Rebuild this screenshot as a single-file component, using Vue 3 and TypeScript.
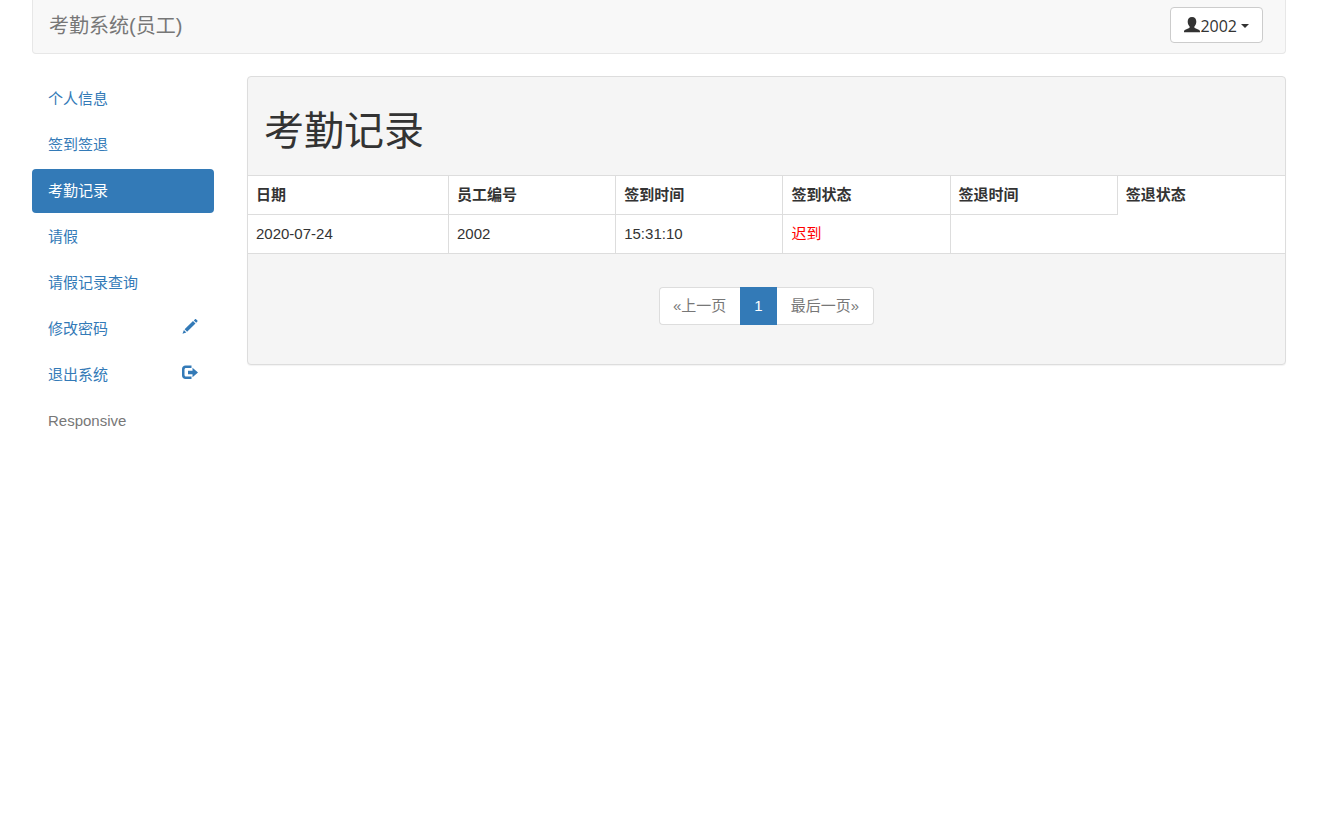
<script setup lang="ts">
interface NavItem {
  label: string
  icon?: 'pencil' | 'logout'
  active?: boolean
  muted?: boolean
}

interface AttendanceRecord {
  date: string
  employeeId: string
  signInTime: string
  signInStatus: string
}

const employeeId = '2002'

const navItems: NavItem[] = [
  { label: '个人信息' },
  { label: '签到签退' },
  { label: '考勤记录', active: true },
  { label: '请假' },
  { label: '请假记录查询' },
  { label: '修改密码', icon: 'pencil' },
  { label: '退出系统', icon: 'logout' },
  { label: 'Responsive', muted: true },
]

const columns: string[] = ['日期', '员工编号', '签到时间', '签到状态', '签退时间', '签退状态']

const records: AttendanceRecord[] = [
  { date: '2020-07-24', employeeId: '2002', signInTime: '15:31:10', signInStatus: '迟到' },
]
</script>

<template>
  <div class="page">
    <header class="navbar">
      <a class="brand" href="#">考勤系统(员工)</a>
      <button class="user-button" type="button" aria-haspopup="true">
        <svg class="icon" viewBox="0 0 16 16" aria-hidden="true">
          <path d="M8 0C5.200 0 3.700 1.800 3.700 4.500c0 2 .7 3.700 1.700 4.800.5.6.4 1.300-.2 1.600L1.300 12.700C.5 13.100 0 13.700 0 14.500V15.200h16v-.7c0-.8-.5-1.400-1.300-1.800l-3.900-1.800c-.6-.3-.7-1-.2-1.600 1-1.100 1.700-2.800 1.700-4.800C12.300 1.800 10.800 0 8 0z" />
        </svg>
        <span>{{ employeeId }}</span>
        <span class="caret"></span>
      </button>
    </header>

    <div class="columns">
      <nav class="sidebar">
        <ul class="nav-list">
          <li v-for="item in navItems" :key="item.label">
            <a class="nav-link" :class="{ active: item.active, muted: item.muted }" href="#">
              <span>{{ item.label }}</span>
              <svg v-if="item.icon === 'pencil'" class="icon" viewBox="0 0 16 16" aria-hidden="true">
                <path d="M13 1.200c.3-.3.700-.3 1 0l1.400 1.400c.3.3.3.7 0 1l-1.200 1.200-2.400-2.400zM11 3.100l2.500 2.500-8.400 8.200-2.500-2.500zM1.900 12l2.400 2.400L.5 15.800z" />
              </svg>
              <svg v-if="item.icon === 'logout'" class="icon" viewBox="0 0 16 16" aria-hidden="true">
                <path d="M9.500 1.500H3.500C1.500 1.500 0 3 0 5v6.500C0 13.500 1.500 15 3.500 15h6v-2.500H4c-.8 0-1.500-.7-1.500-1.500V5.500C2.500 4.700 3.200 4 4 4h5.500zM10.500 3.700v3H6v3.600h4.500v3L16 8.500z" />
              </svg>
            </a>
          </li>
        </ul>
      </nav>

      <main class="panel">
        <h1 class="panel-title">考勤记录</h1>
        <table class="records">
          <thead>
            <tr>
              <th v-for="column in columns" :key="column" scope="col">{{ column }}</th>
            </tr>
          </thead>
          <tbody>
            <tr v-for="record in records" :key="record.date">
              <td>{{ record.date }}</td>
              <td>{{ record.employeeId }}</td>
              <td>{{ record.signInTime }}</td>
              <td class="late">{{ record.signInStatus }}</td>
              <td colspan="2"></td>
            </tr>
          </tbody>
        </table>
        <nav class="pager" aria-label="分页">
          <ul class="pagination">
            <li><a class="page-link" href="#">«上一页</a></li>
            <li><a class="page-link current" href="#" aria-current="page">1</a></li>
            <li><a class="page-link" href="#">最后一页»</a></li>
          </ul>
        </nav>
      </main>
    </div>
  </div>
</template>

<style>
body {
  background: #fff;
}
</style>

<style scoped>
.page {
  box-sizing: border-box;
  padding: 0 35px 0 32px;
  font-family: "Liberation Sans", "Noto Sans CJK SC", sans-serif;
  font-size: 15px;
  line-height: 22px;
  color: #333;
}

.navbar {
  display: flex;
  align-items: flex-start;
  justify-content: space-between;
  box-sizing: border-box;
  height: 54px;
  margin-bottom: 22px;
  padding: 7px 22px 0 16px;
  background: #f8f8f8;
  border: 1px solid #e7e7e7;
  border-top: 0;
  border-radius: 0 0 4px 4px;
}

.brand {
  padding: 8px 0;
  font-size: 20px;
  color: #777;
  text-decoration: none;
}

.user-button {
  display: flex;
  align-items: center;
  box-sizing: border-box;
  height: 36px;
  padding: 1px 13px 0;
  font-family: "Open Sans", "Noto Sans", sans-serif;
  font-size: 16px;
  line-height: 22px;
  color: #333;
  background: #fff;
  border: 1px solid #ccc;
  border-radius: 4px;
}

.icon {
  width: 16px;
  height: 16px;
  fill: currentColor;
}

.user-button .icon {
  margin-bottom: 2px;
}

.caret {
  margin-left: 4px;
  border-top: 4px solid #333;
  border-right: 4px solid transparent;
  border-left: 4px solid transparent;
}

.columns {
  display: grid;
  grid-template-columns: 182px 1fr;
  align-items: start;
  gap: 33px;
}

.nav-list {
  display: grid;
  gap: 2px;
  margin: 0;
  padding: 1px 0 0;
  list-style: none;
}

.nav-link {
  display: flex;
  justify-content: space-between;
  padding: 11px 16px;
  color: #337ab7;
  text-decoration: none;
  border-radius: 4px;
}

.nav-link.active {
  color: #fff;
  background: #337ab7;
}

.nav-link.muted {
  color: #777;
}

.panel {
  background: #f5f5f5;
  border: 1px solid #ddd;
  border-radius: 4px;
  box-shadow: 0 1px 1px rgba(0, 0, 0, 0.05);
}

.panel-title {
  margin: 0;
  padding: 32px 16px 22px;
  font-size: 40px;
  font-weight: 400;
  line-height: 44px;
}

.records {
  width: 100%;
  table-layout: fixed;
  border-collapse: separate;
  border-spacing: 0;
  background: #fff;
  border-top: 1px solid #ddd;
  border-bottom: 1px solid #ddd;
}

.records th,
.records td {
  height: 22px;
  padding: 8px;
  text-align: left;
  border-right: 1px solid #ddd;
}

.records th {
  border-bottom: 1px solid #ddd;
}

.records th:first-child {
  width: 184px;
}

.records th:last-child {
  border-color: transparent;
}

.records th:last-child,
.records td:last-child {
  border-right: 0;
}

.records .late {
  color: #f00;
}

.pager {
  padding: 33px 0 39px;
}

.pagination {
  display: flex;
  justify-content: center;
  margin: 0;
  padding: 0;
  list-style: none;
}

.page-link {
  display: block;
  padding: 7px 14px;
  color: #777;
  text-decoration: none;
  background: #fff;
  border: 1px solid #ddd;
  border-width: 1px 0;
}

li:first-child .page-link {
  padding-left: 13px;
  border-left-width: 1px;
  border-radius: 4px 0 0 4px;
}

li:last-child .page-link {
  border-right-width: 1px;
  border-radius: 0 4px 4px 0;
}

.page-link.current {
  color: #fff;
  background: #337ab7;
  border-color: #337ab7;
}
</style>
